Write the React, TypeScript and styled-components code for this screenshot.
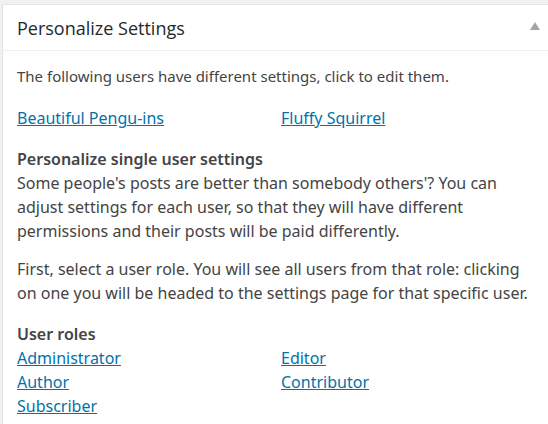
import React from "react";
import styled, { createGlobalStyle } from "styled-components";

const Global = createGlobalStyle`
  html, body { margin: 0; padding: 0; background: #f1f1f1; overflow: hidden; }
  body { font-family: "Noto Sans", "Open Sans", "Liberation Sans", sans-serif; color: #444; }
`;

const Panel = styled.section`
  margin: 4px -20px 0 2px;
  background: #fff;
  border: 1px solid #e5e5e5;
  box-shadow: 0 1px 1px rgba(0, 0, 0, 0.04);
  min-height: 440px;
`;

const Header = styled.div`
  display: flex;
  align-items: center;
  justify-content: space-between;
  height: 45px;
  padding: 0 27px 0 14px;
  border-bottom: 1px solid #eee;
`;

const Title = styled.h2`
  margin: 0;
  font-family: "Open Sans", sans-serif;
  font-size: 18px;
  font-weight: 400;
  color: #23282d;
  line-height: 1;
`;

const Toggle = styled.span`
  width: 0;
  height: 0;
  border-left: 5px solid transparent;
  border-right: 5px solid transparent;
  border-bottom: 8px solid #a0a5aa;
  margin-top: -3px;
`;

const Inside = styled.div`
  padding: 13px 14px 12px;
  width: 518px;
  font-size: 16px;
  line-height: 24px;
`;

const Para = styled.p<{ $gap?: number; $small?: boolean }>`
  margin: 0 0 ${(p) => p.$gap ?? 16}px;
  font-size: ${(p) => (p.$small ? 15 : 16)}px;
`;

const Heading = styled.div`
  font-weight: 600;
  color: #444;
`;

const LinkGrid = styled.div<{ $gap?: number }>`
  display: grid;
  grid-template-columns: 264px 1fr;
  margin-bottom: ${(p) => p.$gap ?? 0}px;
`;

const Link = styled.a`
  color: #0073aa;
  text-decoration: underline;
  justify-self: start;
`;

export default function App() {
  return (
    <>
      <Global />
      <Panel>
        <Header>
          <Title>Personalize Settings</Title>
          <Toggle />
        </Header>
        <Inside>
          <Para $small $gap={18}>The following users have different settings, click to edit them.</Para>
          <LinkGrid $gap={17}>
            <Link href="#">Beautiful Pengu-ins</Link>
            <Link href="#">Fluffy Squirrel</Link>
          </LinkGrid>
          <Heading>Personalize single user settings</Heading>
          <Para $gap={14}>
            Some people's posts are better than somebody others'? You can adjust settings for each user,
            so that they will have different permissions and their posts will be paid differently.
          </Para>
          <Para $gap={17}>
            First, select a user role. You will see all users from that role: clicking on one you will
            be headed to the settings page for that specific user.
          </Para>
          <Heading>User roles</Heading>
          <LinkGrid>
            <Link href="#">Administrator</Link>
            <Link href="#">Editor</Link>
            <Link href="#">Author</Link>
            <Link href="#">Contributor</Link>
            <Link href="#">Subscriber</Link>
          </LinkGrid>
        </Inside>
      </Panel>
    </>
  );
}
